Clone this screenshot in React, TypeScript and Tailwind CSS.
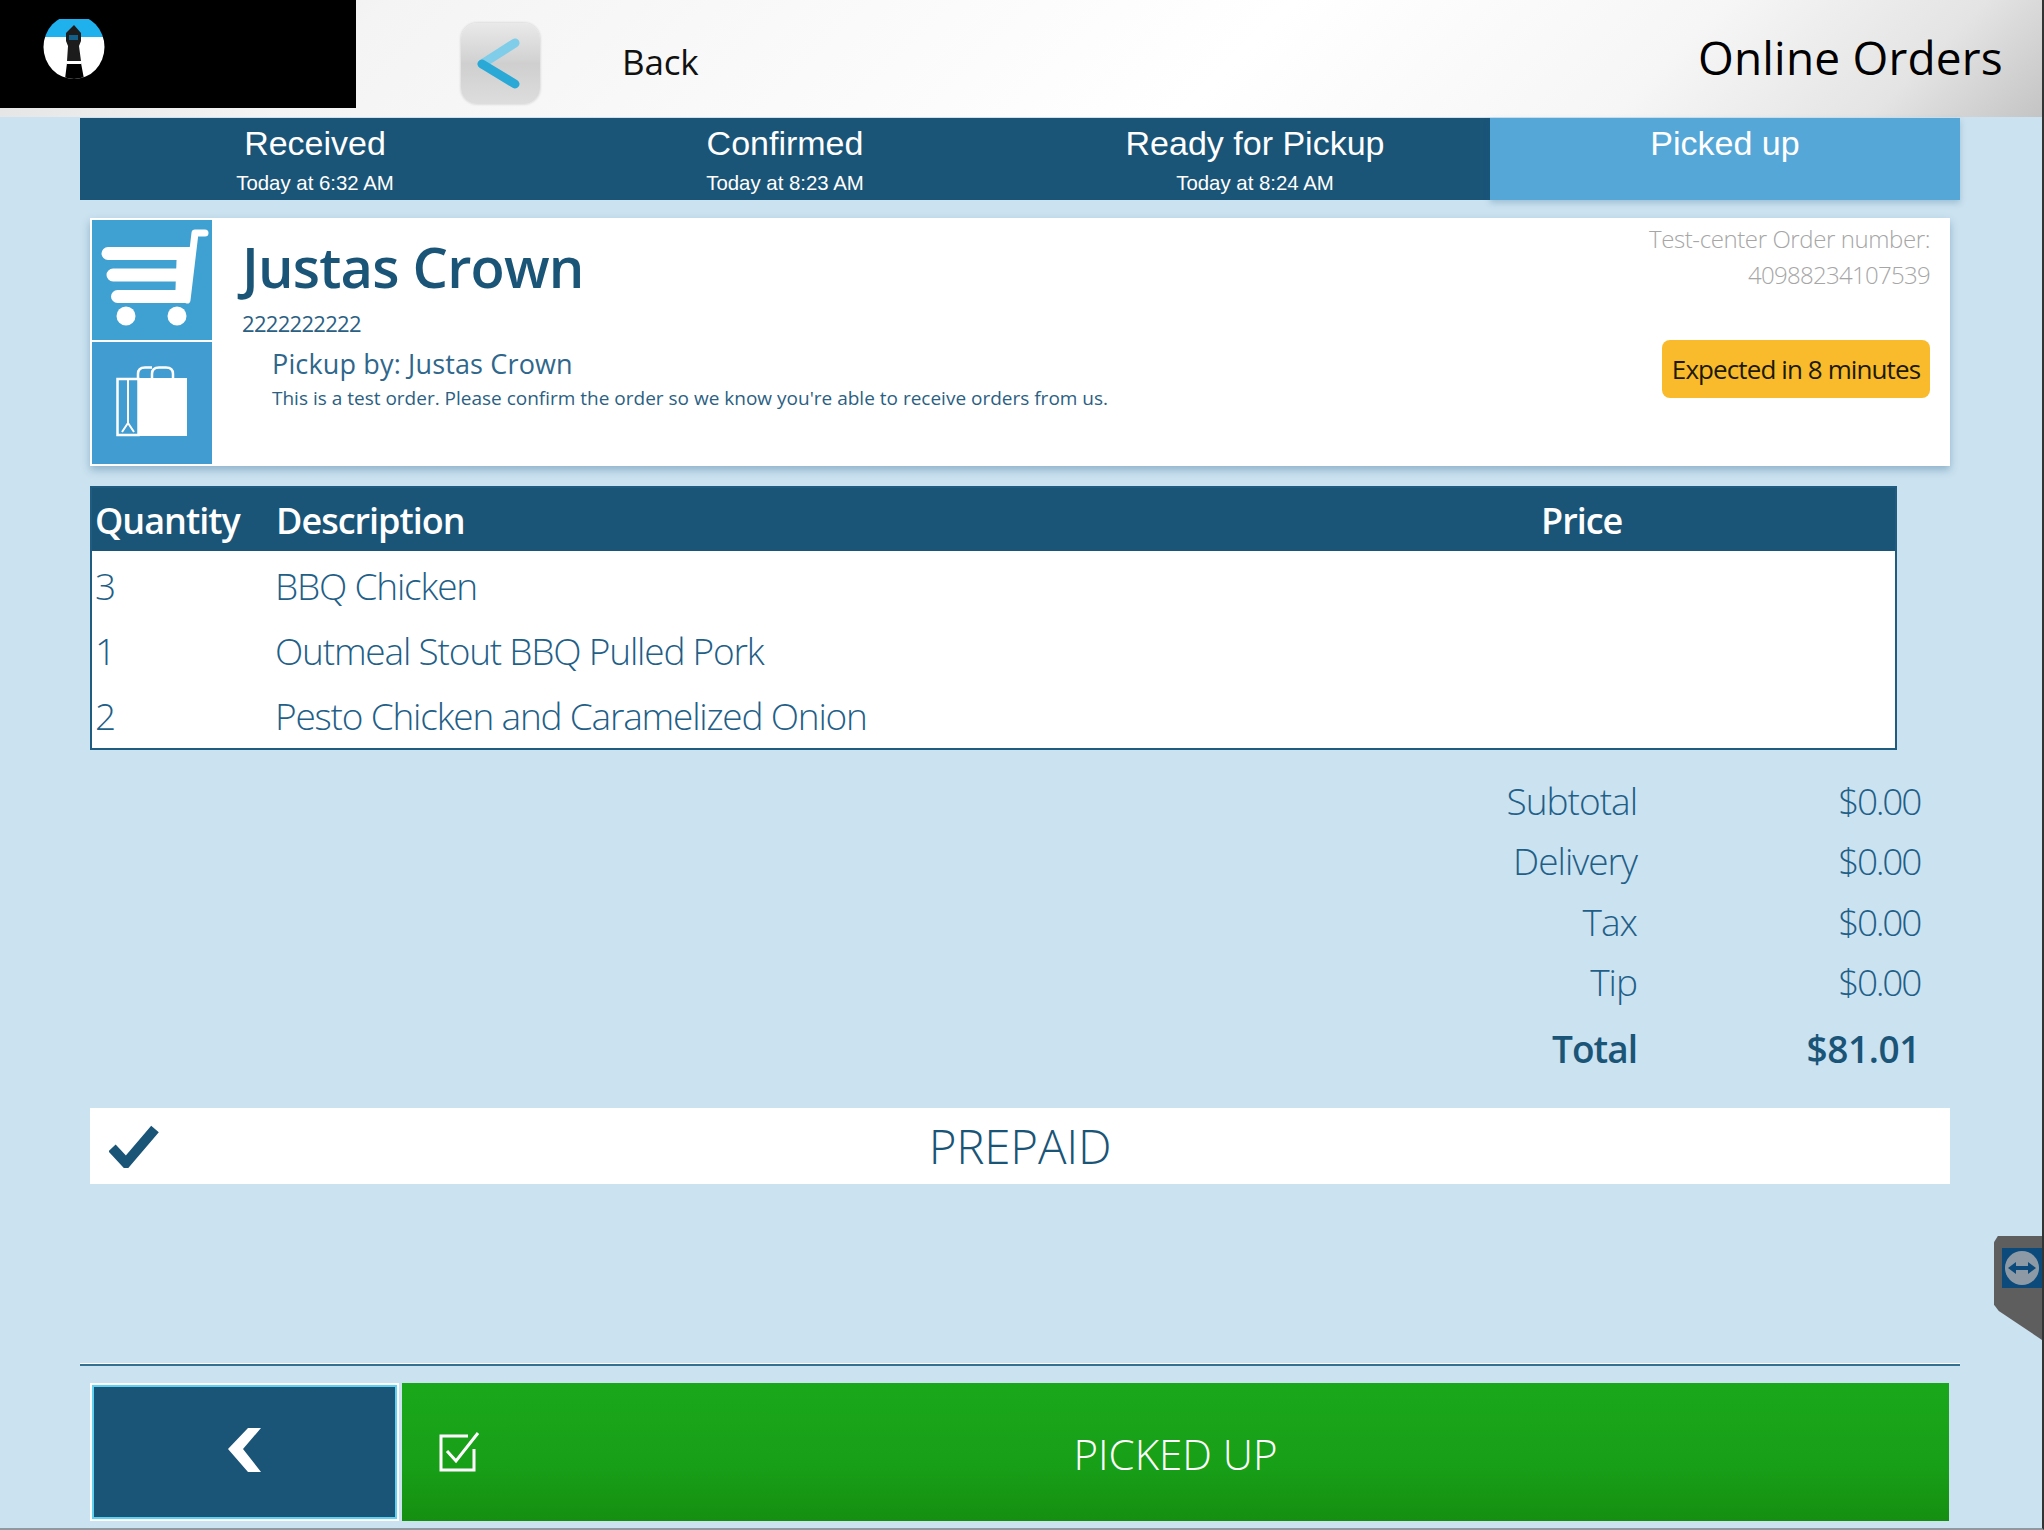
import React from "react";

const Tab = ({ title, time, active }: { title: string; time?: string; active?: boolean }) => (
  <div className={`flex-1 flex flex-col items-center text-white font-['Liberation_Sans',sans-serif] ${active ? "bg-[#55a7d8] shadow-[0_3px_6px_rgba(30,90,130,0.25)]" : ""}`}>
    <div className="text-[34px] leading-[40px] mt-[5px]">{title}</div>
    {time && <div className="text-[20.4px] leading-[24px] mt-[8px] font-normal">{time}</div>}
  </div>
);

const Row = ({ q, d }: { q: string; d: string }) => (
  <div className="flex h-[65px] items-center pt-[5px] text-[37px] font-light text-[#1f5f88] tracking-[-1.2px]">
    <div className="w-[183px] pl-[3px]">{q}</div>
    <div>{d}</div>
  </div>
);

const Total = ({ l, v, bold }: { l: string; v: string; bold?: boolean }) => (
  <div className={`flex justify-end items-center pr-[122px] ${bold ? "h-[66px] font-semibold text-[#1a5578] mt-[4px]" : "h-[60.5px] font-light text-[#1f5f88]"} text-[37px] tracking-[-1px]`}>
    <div>{l}</div>
    <div className={`w-[283px] text-right ${bold ? "tracking-[-0.4px]" : "tracking-[-2.3px]"}`}>{v}</div>
  </div>
);

export default function App() {
  return (
    <div className="relative w-[2044px] h-[1530px] overflow-hidden bg-[#cbe2f0] flex flex-col font-['Open_Sans',sans-serif] border-r-2 border-[#333] border-b-2 border-b-[#8f9aa0]">
      {/* header */}
      <div className="h-[117px] flex items-start bg-[linear-gradient(135deg,#e0e0e0_0%,#f4f4f4_18%,#ffffff_60%,#f6f6f6_80%,#e4e4e4_92%,#c4c4c4_100%)]">
        <div className="w-[356px] h-[108px] bg-black pl-[43px] pt-[19px] shrink-0">
          <svg width="62" height="60" viewBox="0 0 62 60">
            <defs>
              <clipPath id="c"><ellipse cx="31" cy="28" rx="30.5" ry="32" /></clipPath>
            </defs>
            <g clipPath="url(#c)">
              <rect width="62" height="18" fill="#1fb0ee" />
              <rect y="18" width="62" height="42" fill="#fff" />
              <path d="M22 60 L24 44 H38 L41 60 Z" fill="#000" />
              <path d="M24 42 L25 27 L23 22 V14 L31 6 L38 14 V22 L36 27 L38 42 Z" fill="#1c1c1c" />
              <rect x="24" y="42" width="14" height="3" fill="#fff" />
              <rect x="26" y="16" width="9" height="5" fill="#125f8a" />
            </g>
          </svg>
        </div>
        <div className="ml-[105px] mt-[23px] w-[79px] h-[81px] rounded-[16px] bg-[linear-gradient(180deg,#e9e9e9_0%,#d3d3d3_45%,#cfcfcf_50%,#dddddd_100%)] shadow-[0_0_3px_rgba(0,0,0,0.2)] flex items-center justify-center">
          <svg width="46" height="54" viewBox="0 0 46 54" className="-ml-[3px]">
            <path d="M39 6 L6 27" stroke="#7fcde8" strokeWidth="9" strokeLinecap="round" fill="none" />
            <path d="M6 27 L39 47" stroke="#2aa9d6" strokeWidth="9" strokeLinecap="round" fill="none" />
          </svg>
        </div>
        <div className="ml-[82px] mt-[38px] text-[35px] leading-[48px] text-[#111] tracking-[-0.2px]">Back</div>
        <div className="ml-auto mr-[39px] mt-[29px] text-[46px] leading-[56px] text-black tracking-[0.2px]">Online Orders</div>
      </div>

      {/* tabs */}
      <div className="mx-[80px] mt-[1px] h-[82px] flex bg-[#1a5578] w-[1880px]">
        <Tab title="Received" time="Today at 6:32 AM" />
        <Tab title="Confirmed" time="Today at 8:23 AM" />
        <Tab title="Ready for Pickup" time="Today at 8:24 AM" />
        <Tab title="Picked up" active />
      </div>

      {/* order card */}
      <div className="ml-[90px] mt-[18px] w-[1860px] h-[248px] bg-white flex shadow-[0_4px_8px_rgba(30,90,130,0.35)] p-[2px]">
        <div className="w-[120px] flex flex-col gap-[2px] shrink-0">
          <div className="h-[120px] bg-[#3fa0d2]">
            <svg width="120" height="120" viewBox="0 0 120 120">
              <path d="M113 13 H103 L95 80" stroke="#fff" strokeWidth="7" strokeLinecap="round" strokeLinejoin="round" fill="none" />
              <path d="M16 33.5 H90 M21 55 H88 M25.5 76.5 H90" stroke="#fff" strokeWidth="13" strokeLinecap="round" fill="none" />
              <path d="M85 27 H99 L93 83 H83 Z" fill="#fff" />
              <circle cx="34" cy="96" r="9.5" fill="#fff" />
              <circle cx="85" cy="96" r="9.5" fill="#fff" />
            </svg>
          </div>
          <div className="h-[122px] bg-[#419cd2] flex items-start justify-center pt-[24px]">
            <svg width="76" height="72" viewBox="0 0 76 72">
              <path d="M38 13 V8 Q38 1.5 45 1.5 H52 Q59 1.5 59 8 V13" stroke="#fff" strokeWidth="2.5" fill="none" />
              <path d="M24 13 V8 Q24 1.5 31 1.5 H38" stroke="#fff" strokeWidth="2.5" fill="none" />
              <rect x="24" y="12" width="49" height="58" fill="#fff" />
              <rect x="3.5" y="13" width="21" height="56" stroke="#fff" strokeWidth="2.5" fill="none" />
              <path d="M14 13 V57 M8 66 L14 57 L20 66" stroke="#fff" strokeWidth="2" fill="none" />
            </svg>
          </div>
        </div>
        <div className="pl-[30px] flex-1 flex flex-col text-[#1f5f88]">
          <div className="text-[56px] leading-[66px] mt-[13px] font-semibold text-[#1a5578] tracking-[-0.8px]">Justas Crown</div>
          <div className="text-[22px] leading-[30px] mt-[9px] tracking-[-0.7px] text-[#2b5f83]">2222222222</div>
          <div className="pl-[30px] mt-[8px] text-[27px] leading-[36px] tracking-[0.15px] text-[#2f678c]">Pickup by: Justas Crown</div>
          <div className="pl-[30px] mt-[3px] text-[19px] leading-[26px] tracking-[0px] text-[#2b5f83]">This is a test order. Please confirm the order so we know you're able to receive orders from us.</div>
        </div>
        <div className="pr-[18px] flex flex-col items-end shrink-0">
          <div className="text-[24px] leading-[36px] text-[#a6a6a6] text-right mt-[1px] tracking-[-0.4px] font-light">
            <div>Test-center Order number:</div>
            <div className="tracking-[-0.7px]">40988234107539</div>
          </div>
          <div className="mt-[47px] w-[268px] h-[58px] rounded-[8px] bg-[#f9bb2b] flex items-center justify-center text-[26px] text-[#1c1a05] tracking-[-0.9px]">Expected in 8 minutes</div>
        </div>
      </div>

      {/* items */}
      <div className="ml-[90px] mt-[20px] w-[1807px] h-[264px] bg-white border-2 border-[#1f5c80] overflow-hidden">
        <div className="flex h-[64px] -mt-[1px] pt-[4px] items-center bg-[#1a5578] text-white text-[36px] font-semibold tracking-[-1px]">
          <div className="w-[184px] pl-[3px]">Quantity</div>
          <div className="w-[1265px]">Description</div>
          <div>Price</div>
        </div>
        <Row q="3" d="BBQ Chicken" />
        <Row q="1" d="Outmeal Stout BBQ Pulled Pork" />
        <Row q="2" d="Pesto Chicken and Caramelized Onion" />
      </div>

      {/* totals */}
      <div className="mt-[20px]">
        <Total l="Subtotal" v="$0.00" />
        <Total l="Delivery" v="$0.00" />
        <Total l="Tax" v="$0.00" />
        <Total l="Tip" v="$0.00" />
        <Total l="Total" v="$81.01" bold />
      </div>

      {/* prepaid */}
      <div className="relative ml-[90px] mt-[26px] w-[1860px] h-[76px] bg-white flex items-center justify-center text-[47.5px] font-light text-[#1a5578] tracking-[-0.2px]">
        <svg className="absolute left-[19px] top-[16px]" width="50" height="44" viewBox="0 0 50 44">
          <path d="M3 24 L17 39 L46 5" stroke="#1a5578" strokeWidth="10" fill="none" />
        </svg>
        <span>PREPAID</span>
      </div>

      {/* divider */}
      <div className="mt-auto ml-[80px] w-[1880px] h-[3px] bg-[#35708f] border-t border-white" />

      {/* bottom */}
      <div className="ml-[92px] mt-[17px] mb-[7px] flex gap-[5px] h-[138px]">
        <div className="w-[305px] mt-[2px] h-[134px] bg-[#1a5578] border-2 border-[#5fd2f2] outline-2 outline-white flex items-center justify-center">
          <svg width="38" height="44" viewBox="0 0 38 44" className="-mt-[4px]">
            <path d="M35 0 H22 L2 21 L22 44 H35 L17 21 Z" fill="#fff" />
          </svg>
        </div>
        <div className="relative w-[1547px] bg-[linear-gradient(180deg,#1aa81b_0%,#189f18_60%,#158f10_100%)] flex items-center justify-center pt-[3px] text-[42px] font-light text-white">
          <svg className="absolute left-[36px] top-[49px]" width="44" height="42" viewBox="0 0 44 42">
            <path d="M30 4 H3 V38 H36 V17" stroke="#fff" strokeWidth="3" fill="none" />
            <path d="M9 19 L18 29 L40 1" stroke="#fff" strokeWidth="3" fill="none" />
          </svg>
          <span>PICKED UP</span>
        </div>
      </div>

      {/* remote-support tab */}
      <div className="absolute right-0 top-[1236px] w-[48px] h-[104px] bg-[#5e5e5e] [clip-path:polygon(8%_0,100%_0,100%_100%,10%_72%,0_66%,0_6%)]">
        <div className="ml-[8px] mt-[12px] w-[40px] h-[40px] bg-[#0b4a7a] flex items-center justify-center">
          <svg width="36" height="36" viewBox="0 0 36 36">
            <circle cx="18" cy="18" r="17" fill="#8d9aa5" />
            <path d="M4 18 L12 12 V16 H24 V12 L32 18 L24 24 V20 H12 V24 Z" fill="#0b4a7a" />
          </svg>
        </div>
      </div>
    </div>
  );
}
